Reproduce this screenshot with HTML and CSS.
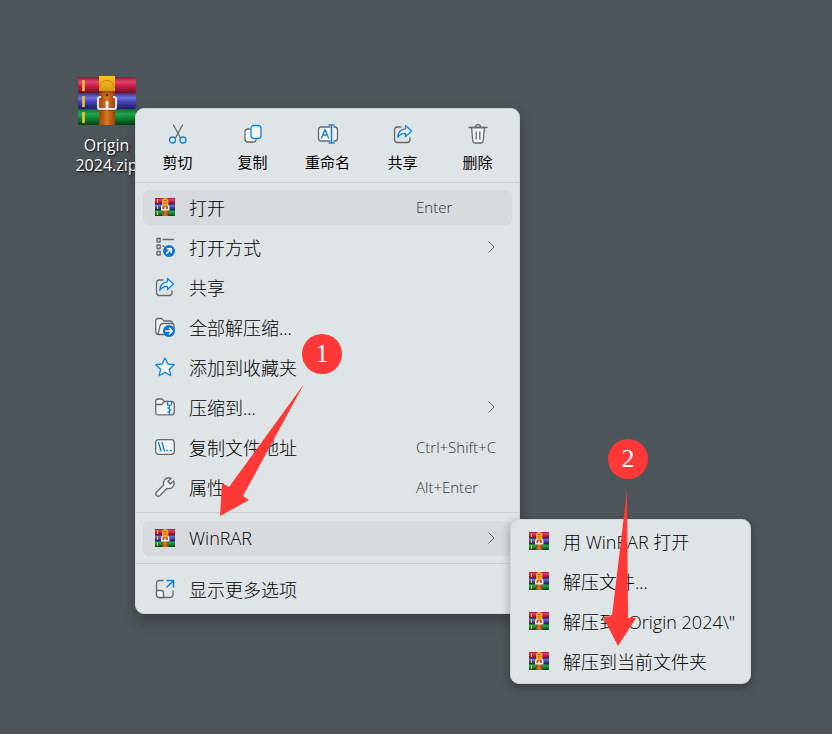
FILE: index.html
```html
<!DOCTYPE html>
<html lang="zh-CN">
<head>
<meta charset="utf-8">
<meta name="viewport" content="width=device-width, initial-scale=1">
<title>Origin 2024.zip</title>
<link rel="stylesheet" href="styles.css">
</head>
<body>
<svg class="defs" aria-hidden="true">
  <defs>
    <linearGradient id="red" x1="0" y1="0" x2="0" y2="1"><stop offset="0" stop-color="#8c1733"/><stop offset=".3" stop-color="#e2456e"/><stop offset=".55" stop-color="#c81f48"/><stop offset="1" stop-color="#6d0d25"/></linearGradient>
    <linearGradient id="blue" x1="0" y1="0" x2="0" y2="1"><stop offset="0" stop-color="#34308a"/><stop offset=".3" stop-color="#7070dc"/><stop offset=".55" stop-color="#4644b4"/><stop offset="1" stop-color="#201c60"/></linearGradient>
    <linearGradient id="green" x1="0" y1="0" x2="0" y2="1"><stop offset="0" stop-color="#0c6a2c"/><stop offset=".3" stop-color="#22a750"/><stop offset=".55" stop-color="#0f8a38"/><stop offset="1" stop-color="#053d18"/></linearGradient>
    <linearGradient id="gold" x1="0" y1="0" x2="0" y2="1"><stop offset="0" stop-color="#f8c820"/><stop offset="1" stop-color="#d98a18"/></linearGradient>
    <linearGradient id="belt" x1="0" y1="0" x2="1" y2="0"><stop offset="0" stop-color="#9a4208"/><stop offset=".5" stop-color="#d97a22"/><stop offset="1" stop-color="#9a4208"/></linearGradient>
    <symbol id="rar-large" viewBox="0 0 58 50">
      <rect x="0" y="1" width="58" height="16" rx="1.5" fill="url(#red)"/>
      <rect x="0" y="17" width="58" height="16" rx="1.5" fill="url(#blue)"/>
      <rect x="0" y="33" width="58" height="16" rx="1.5" fill="url(#green)"/>
      <path d="M5.500 4v11M5.500 20v11M5.500 36v11" stroke="#f2c12c" stroke-width="2.6"/>
      <rect x="21" y="0" width="16" height="17" fill="url(#gold)"/>
      <path d="M22 12c0-10 14-10 14 0" fill="none" stroke="#c77c10" stroke-width="1"/>
      <path d="M21 15h16v34H21z" fill="url(#belt)"/>
      <path d="M21 34h16M21 16h16" stroke="#6d2d08" stroke-width="1.2"/>
      <circle cx="29" cy="19" r="1.4" fill="#54210a"/>
      <path d="M23 21h-1q-2 0-2 2v8q0 2 2 2h14q2 0 2-2v-8q0-2-2-2h-1" fill="none" stroke="#dddee1" stroke-width="2.2"/>
      <path d="M29 26v7" stroke="#f4f4f5" stroke-width="2.6" stroke-linecap="round"/>
    </symbol>
    <symbol id="rar" viewBox="0 0 20 20">
      <rect y="1" width="20" height="6" fill="url(#red)"/>
      <rect y="7" width="20" height="6" fill="url(#blue)"/>
      <rect y="13" width="20" height="6" fill="url(#green)"/>
      <path d="M2.500 2v4M2.500 8v4M2.500 14v4" stroke="#f0c030" stroke-width="1.1"/>
      <path d="M7 9V4q0-3 3.200-3t3.200 3v5z" fill="#efa52c"/>
      <path d="M8.700 3.500h3M8.700 6h3" stroke="#9b5b12" stroke-width=".9"/>
      <path d="M7 9h6.400v10H7z" fill="url(#belt)"/>
      <path d="M7.500 8.500 6.700 10v2.700h7V10l-.8-1.500" fill="none" stroke="#eef0f1" stroke-width="1.500"/>
      <path d="M10.200 10.300v2.500" stroke="#eef0f1" stroke-width="1.500"/>
    </symbol>
    <symbol id="share" viewBox="0 0 20 20">
      <path d="M8 3H4.500Q1.500 3 1.500 6v9.500q0 3 3 3H14q3 0 3-3V14" class="g"/>
      <path d="M12.500 1.500 18.500 7l-6 5.500V9.300Q7.500 9 4.800 13.300 5 5.800 12.500 4.800z" class="bf"/>
    </symbol>
    <symbol id="chevron" viewBox="0 0 7 12"><path d="m.7.7 5.300 5.300L.7 11.300" class="g thin"/></symbol>
  </defs>
</svg>

<main class="desktop">
  <button class="file" type="button">
    <svg class="file-icon" aria-hidden="true"><use href="#rar-large"/></svg>
    <span>Origin<br>2024.zip</span>
  </button>

  <nav class="menu context" aria-label="文件">
    <div class="toolbar">
      <button type="button"><svg class="icon" viewBox="0 0 20 20" aria-hidden="true"><path d="m5.500 1 7 13M14.500 1l-7 13" class="g"/><circle cx="4.500" cy="16" r="3" class="b"/><circle cx="15" cy="16" r="3" class="b"/></svg><span>剪切</span></button>
      <button type="button"><svg class="icon" viewBox="0 0 20 20" aria-hidden="true"><path d="M6.500 5H5Q2 5 2 8v7q0 3 3 3h5q3 0 3-2" class="gf"/><rect x="8" y="1.500" width="10" height="13" rx="3" class="bf"/></svg><span>复制</span></button>
      <button type="button"><svg class="icon wide" viewBox="0 0 22 20" aria-hidden="true"><path d="M13 3H4Q1.500 3 1.500 6v8q0 3 2.500 3h9M17 3h1q2.500 0 2.500 3v8q0 3-2.500 3h-1" class="gf"/><path d="m4.500 14 3.500-8.500L11.500 14M5.800 11h4.400M12 1h5M12 19h5M14.500 1v18" class="b"/></svg><span>重命名</span></button>
      <button type="button"><svg class="icon" aria-hidden="true"><use href="#share"/></svg><span>共享</span></button>
      <button type="button"><svg class="icon" viewBox="0 0 20 20" aria-hidden="true"><path d="m3.500 3.500 1.300 13q.2 2.500 2.500 2.500h5.400q2.300 0 2.500-2.500l1.300-13z" class="gf"/><path d="M1 3.500h18M7.500 3.500q0-2.800 2.500-2.800t2.500 2.800M8.200 8v7M11.800 8v7" class="g"/></svg><span>删除</span></button>
    </div>
    <div class="group">
      <button class="item active" type="button"><svg class="icon" aria-hidden="true"><use href="#rar"/></svg><span class="label">打开</span><span class="keys">Enter</span></button>
      <button class="item" type="button"><svg class="icon" viewBox="0 0 20 20" aria-hidden="true"><path d="M2 1.500h3.200v3.500H2zM2 8h3.200v3.500H2zM2 14.500h3.200V18H2zM8 2.500h10.500M8 9h1" class="g"/><circle cx="14" cy="14" r="6" class="disc"/><path d="m11.500 16.500 4.500-4.500M12.500 11.700h3.800v3.800" class="w"/></svg><span class="label">打开方式</span><svg class="chevron" aria-hidden="true"><use href="#chevron"/></svg></button>
      <button class="item" type="button"><svg class="icon" aria-hidden="true"><use href="#share"/></svg><span class="label">共享</span></button>
      <button class="item" type="button"><svg class="icon" viewBox="0 0 20 20" aria-hidden="true"><path d="M3 17.500Q.7 17 .7 14.500V4Q.7 1.500 3 1.500h3.500L9 4h6q2 0 2.500 2.500" class="gf"/><path d="M3 17.500 5 9q.7-2.500 3-2.500h9q2 0 2 3V12L12 17.500z" class="gf"/><circle cx="14" cy="14" r="6" class="disc"/><path d="M10.800 14H17M14.500 11.200l2.800 2.800-2.800 2.800" class="w"/></svg><span class="label">全部解压缩...</span></button>
      <button class="item" type="button"><svg class="icon" viewBox="0 0 20 20" aria-hidden="true"><path d="m10 1 2.800 6 6.500.7-4.900 4.500 1.400 6.500L10 15.400l-5.800 3.300 1.400-6.500L.7 7.700 7.200 7z" class="bf"/></svg><span class="label">添加到收藏夹</span></button>
      <button class="item" type="button"><svg class="icon" viewBox="0 0 20 20" aria-hidden="true"><path d="M.7 4.500Q.7 2 3 2h4l2.500 2.500h7q2.800 0 2.800 3V15q0 2.800-2.800 2.800h-13Q.7 17.800.7 15zM.7 7.500h6L9.500 4.500" class="gf"/><path d="M12.500 4.500v2.500q0 1.500 2 1.500t2-1.500V4.500M14.500 9v8M13 11h1.500M14.500 13H16M13 15h1.500" class="b"/></svg><span class="label">压缩到...</span><svg class="chevron" aria-hidden="true"><use href="#chevron"/></svg></button>
      <button class="item" type="button"><svg class="icon" viewBox="0 0 20 20" aria-hidden="true"><rect x=".7" y="2.700" width="18.600" height="14.600" rx="3" class="gf"/><path d="m3.500 5.500 2.500 8.500M7 5.500 9.500 14M11.800 13.500h.8M15.400 13.500h.8" class="b"/></svg><span class="label">复制文件地址</span><span class="keys">Ctrl+Shift+C</span></button>
      <button class="item" type="button"><svg class="icon" viewBox="0 0 20 20" aria-hidden="true"><path d="M16 1.300Q12.500-.2 9.800 2.500 7.800 5 8.700 8L1.500 15q-1.500 2 0 3.500t3.500 0l7-7.200q3 .9 5.400-1.100 2.700-2.700 1.200-6.200L15.500 7 12.800 4.500z" class="gf"/></svg><span class="label">属性</span><span class="keys">Alt+Enter</span></button>
    </div>
    <div class="group">
      <button class="item active" type="button" aria-haspopup="true"><svg class="icon" aria-hidden="true"><use href="#rar"/></svg><span class="label">WinRAR</span><svg class="chevron" aria-hidden="true"><use href="#chevron"/></svg></button>
    </div>
    <div class="group">
      <button class="item" type="button"><svg class="icon" viewBox="0 0 20 20" aria-hidden="true"><path d="M8 1.500H4.500Q1.500 1.500 1.500 4.500V15.500q0 3 3 3h10q3.500 0 3.500-3V12" class="g"/><path d="M1.500 11.500H6q2.500 0 2.500 2.500v4.500H4.500q-3 0-3-3z" class="gf"/><path d="m12 8 6.300-6.300M12 1.500h6.500V8" class="b strong"/></svg><span class="label">显示更多选项</span></button>
    </div>
  </nav>

  <nav class="menu submenu" aria-label="WinRAR">
    <button class="item" type="button"><svg class="icon" aria-hidden="true"><use href="#rar"/></svg><span class="label">用 WinRAR 打开</span></button>
    <button class="item" type="button"><svg class="icon" aria-hidden="true"><use href="#rar"/></svg><span class="label">解压文件...</span></button>
    <button class="item" type="button"><svg class="icon" aria-hidden="true"><use href="#rar"/></svg><span class="label">解压到 "Origin 2024\"</span></button>
    <button class="item" type="button"><svg class="icon" aria-hidden="true"><use href="#rar"/></svg><span class="label">解压到当前文件夹</span></button>
  </nav>

  <div class="step step-one">1</div>
  <svg class="arrow arrow-one" viewBox="0 0 84 132" aria-hidden="true"><path d="M84 0 9 103 2 99 0 132 29 116 23 112z"/></svg>
  <div class="step step-two">2</div>
  <svg class="arrow arrow-two" viewBox="0 0 33 156" aria-hidden="true"><path d="M24 0 9 126 0 127 15 156 33 128H25z"/></svg>
</main>
</body>
</html>
```

FILE: styles.css
```css
* { box-sizing: border-box; }

body {
  margin: 0;
  background: #4c555a;
  color: #000;
  font-family: "Open Sans", "Noto Sans CJK SC", sans-serif;
}

button {
  border: 0;
  padding: 0;
  background: none;
  color: inherit;
  font: inherit;
}

.defs { position: absolute; width: 0; height: 0; }

.desktop {
  position: relative;
  min-height: 100vh;
  overflow: hidden;
}

.file {
  position: absolute;
  left: 70px;
  top: 76px;
  width: 73px;
  display: flex;
  flex-direction: column;
  align-items: center;
  gap: 9px;
  color: #fff;
  font-size: 16px;
  line-height: 20px;
  text-shadow: 1px 1px 2px #000;
}

.file-icon { width: 58px; height: 50px; }

.menu {
  position: absolute;
  border: 1px solid #d0d5d8;
  border-radius: 9px;
  background: #dfe4e6;
  box-shadow: 0 6px 14px rgba(0, 0, 0, .25);
  font-weight: 300;
}

.context { left: 135px; top: 108px; width: 385px; }

.submenu {
  left: 510px;
  top: 519px;
  width: 241px;
  padding: 4px 6px;
  display: flex;
  flex-direction: column;
  gap: 5px;
  box-shadow: 0 3px 10px rgba(0, 0, 0, .3);
}

.toolbar {
  display: grid;
  grid-template-columns: repeat(5, 1fr);
  padding: 15px 4px 10px;
  font-size: 15px;
  font-weight: 400;
  line-height: 20px;
}

.toolbar button {
  display: flex;
  flex-direction: column;
  align-items: center;
  gap: 8px;
}

.group {
  display: flex;
  flex-direction: column;
  gap: 5px;
  padding: 7px;
  border-top: 1px solid #cbd0d3;
}

.group + .group { padding-top: 8px; }
.group:last-child { padding-bottom: 6px; }

.item {
  display: flex;
  align-items: center;
  height: 35px;
  padding: 0 0 1px 12px;
  border-radius: 6px;
  font-size: 18px;
  text-align: left;
  white-space: nowrap;
}

.active { background: #d7dbde; }

.icon { flex: none; width: 20px; height: 20px; overflow: visible; }
.icon.wide { width: 22px; }
.label { flex: 1; margin-left: 14px; padding-bottom: 1px; }
.keys { width: 96px; color: #2f3335; font-size: 15px; }
.chevron { width: 7px; height: 12px; margin-right: 17px; }

.g, .gf, .b, .bf, .w {
  fill: none;
  stroke: #666a6c;
  stroke-width: 1.3;
  stroke-linecap: round;
  stroke-linejoin: round;
}
.gf { fill: #f1f3f4; }
.b, .bf { stroke: #1482d8; }
.bf { fill: #f0f6fa; }
.w { stroke: #fff; stroke-width: 1.5; }
.disc { fill: #0a78d4; }
.thin { stroke-width: 1; }
.strong { stroke-width: 1.6; }

.step {
  position: absolute;
  width: 40px;
  height: 40px;
  border-radius: 50%;
  background: #fd3837;
  color: #fff;
  font: 26px/40px "Liberation Serif", serif;
  text-align: center;
}
.step-one { left: 302px; top: 334px; }
.step-two { left: 608px; top: 439px; }

.arrow { position: absolute; fill: #fd3837; }
.arrow-one { left: 220px; top: 384px; width: 84px; height: 132px; }
.arrow-two { left: 603px; top: 490px; width: 33px; height: 156px; }
```
